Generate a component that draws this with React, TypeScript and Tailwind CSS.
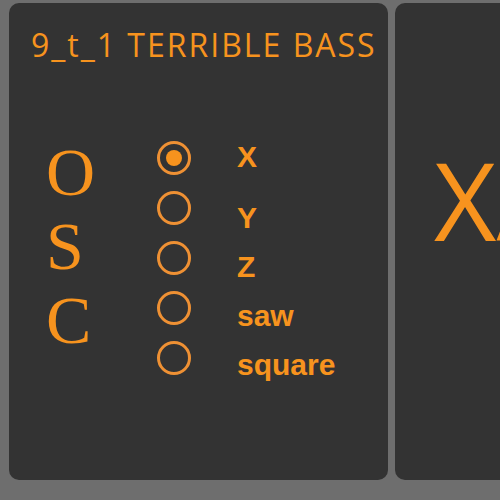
const orange = 'text-[#f7931e]'

const options = ['X', 'Y', 'Z', 'saw', 'square']

function Radio({ checked }: { checked: boolean }) {
    return (
        <div className="w-[34px] h-[34px] rounded-full border-[3px] border-[#ef9134] flex items-center justify-center">
            {checked && <div className="w-[16px] h-[16px] rounded-full bg-[#f7931e]" />}
        </div>
    )
}

export default function App() {
    return (
        <div className="w-[500px] h-[500px] bg-[#6e6e6e] overflow-hidden flex gap-[7px] pt-[3px] pl-[9px]">
            <div className="w-[379px] h-[477px] shrink-0 bg-[#333333] rounded-[10px]">
                <h1
                    className={`${orange} text-[32px] font-medium tracking-[2px] leading-none mt-[26px] pl-[22px] whitespace-nowrap`}
                    style={{ fontFamily: '"Open Sans", sans-serif' }}
                >
                    9_t_1 TERRIBLE BASS
                </h1>
                <div className="flex items-start mt-[71px] pl-[37px]">
                    <div
                        className={`${orange} w-[111px] mt-[3px] text-[68px] leading-[74px]`}
                        style={{ fontFamily: '"Liberation Serif", serif' }}
                    >
                        <div>O</div>
                        <div>S</div>
                        <div>C</div>
                    </div>
                    <div className="flex flex-col gap-[16px] mt-[9px]">
                        {options.map((o, i) => (
                            <Radio key={o} checked={i === 0} />
                        ))}
                    </div>
                    <div
                        className={`${orange} ml-[46px] font-bold text-[30px]`}
                        style={{ fontFamily: '"Liberation Sans", Arial, sans-serif' }}
                    >
                        <div className="leading-[50px] mb-[11px]">X</div>
                        <div className="leading-[49px]">Y</div>
                        <div className="leading-[49px]">Z</div>
                        <div className="leading-[49px]">saw</div>
                        <div className="leading-[49px]">square</div>
                    </div>
                </div>
            </div>
            <div className="w-[300px] h-[477px] shrink-0 bg-[#333333] rounded-[10px] overflow-hidden">
                <div
                    className={`${orange} text-[108px] leading-none mt-[143px] pl-[39px] whitespace-nowrap`}
                    style={{ fontFamily: '"Open Sans", sans-serif' }}
                >
                    XA
                </div>
            </div>
        </div>
    )
}
